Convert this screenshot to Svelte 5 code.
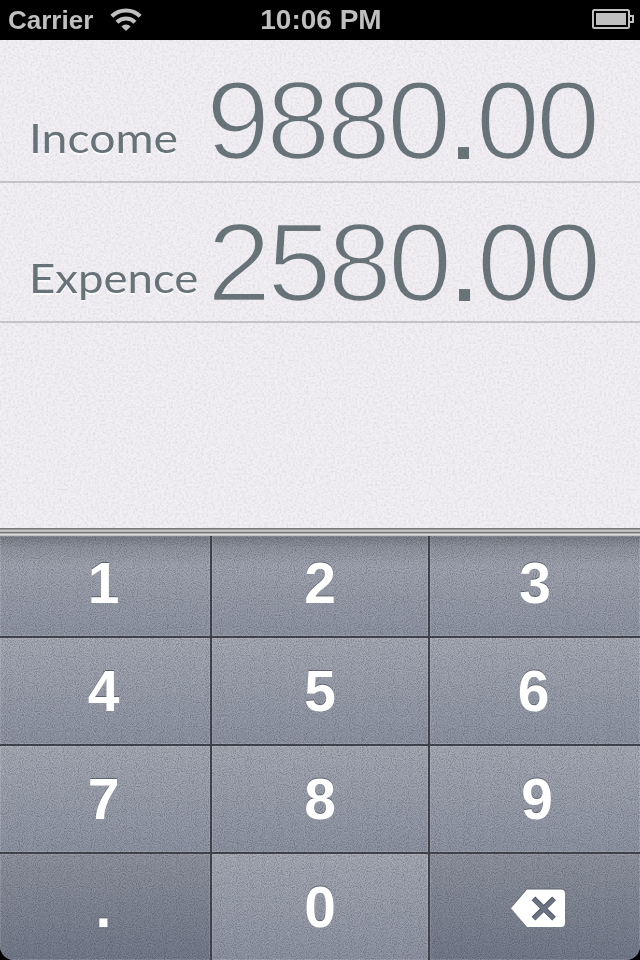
<script>
  const entries = [
    { label: 'Income', whole: '9880', cents: '00' },
    { label: 'Expence', whole: '2580', cents: '00' }
  ];
  const keys = ['1', '2', '3', '4', '5', '6', '7', '8', '9', '.', '0', 'delete'];
</script>

<div class="screen">
  <header class="status">
    <div class="carrier">
      <span>Carrier</span>
      <svg width="32" height="24" viewBox="0 0 32 24" fill="none" stroke="#bfbfbf" stroke-width="4.2">
        <path d="M1.8 9.2 A20.5 20.5 0 0 1 30.2 9.2" />
        <path d="M7 15.2 A12.8 12.8 0 0 1 25 15.2" />
        <path d="M16 24 L11.4 19.4 A6.5 6.5 0 0 1 20.6 19.4 Z" fill="#bfbfbf" stroke="none" />
      </svg>
    </div>
    <time>10:06 PM</time>
    <svg class="battery" width="42" height="20" viewBox="0 0 42 20">
      <rect x="1" y="1" width="36" height="18" rx="1.5" fill="none" stroke="#bfbfbf" stroke-width="2" />
      <rect x="4" y="4" width="30" height="12" fill="#bfbfbf" />
      <path d="M38 7h3v6H38" fill="none" stroke="#bfbfbf" stroke-width="2" />
    </svg>
  </header>

  <main class="paper">
    {#each entries as entry}
      <section class="entry">
        <span class="label">{entry.label}</span>
        <span class="amount">{entry.whole}<span class="point">.</span>{entry.cents}</span>
      </section>
    {/each}
    <svg class="grain" width="640" height="488">
      <filter id="fibre" x="0" y="0" width="100%" height="100%" color-interpolation-filters="sRGB">
        <feTurbulence type="fractalNoise" baseFrequency="0.45" numOctaves="3" seed="4" />
        <feColorMatrix values="0 0 0 0 0.4  0 0 0 0 0.4  0 0 0 0 0.43  0.25 0 0 0 -0.1" />
      </filter>
      <rect width="640" height="488" filter="url(#fibre)" />
    </svg>
  </main>

  <div class="ledge"></div>

  <div class="keypad">
    {#each keys as key, i}
      <button class="key" class:left={i % 3 === 0} class:six={key === '6'} class:nine={key === '9'} class:dark={key === '.' || key === 'delete'} class:top={i < 3} aria-label={key}>
        {#if key === 'delete'}
          <svg class="face erase" width="54" height="39" viewBox="0 0 54 39">
            <path d="M16 0.5H50a4 4 0 0 1 4 4V34a4 4 0 0 1-4 4H16L0 19.3Z" fill="#fff" />
            <path d="M22.5 9.3L43 29.6M43 9.3L22.5 29.6" stroke="#4b5261" stroke-width="5.2" />
            <path d="M23 10.1L42.7 29.6M42.7 10.1L23 29.6" stroke="#6b7383" stroke-width="4" />
          </svg>
        {:else}
          <span class="face">{key}</span>
        {/if}
      </button>
    {/each}
    <svg class="grain" width="640" height="424">
      <filter id="speckle" x="0" y="0" width="100%" height="100%" color-interpolation-filters="sRGB">
        <feTurbulence type="fractalNoise" baseFrequency="0.93" numOctaves="2" seed="9" />
        <feColorMatrix values="0 0 0 0 0.15  0 0 0 0 0.16  0 0 0 0 0.2  0.65 0 0 0 -0.25" />
      </filter>
      <rect width="640" height="424" filter="url(#speckle)" />
    </svg>
  </div>
</div>

<style>
  :global(body) { background: #000; }
  .screen {
    width: 640px;
    height: 960px;
    display: flex;
    flex-direction: column;
    overflow: hidden;
    background: #000;
    font-family: "Liberation Sans", Arial, sans-serif;
  }
  .status {
    height: 40px;
    display: grid;
    grid-template-columns: 1fr auto 1fr;
    align-items: center;
    box-sizing: border-box;
    padding: 0 6px 0 8px;
    color: #bfbfbf;
    font-size: 26px;
    font-weight: bold;
    line-height: 40px;
  }
  .carrier { display: flex; align-items: center; gap: 17px; }
  .carrier svg { margin-top: -2px; }
  time { font-size: 28px; }
  .battery { justify-self: end; margin-top: -2px; }
  .paper {
    position: relative;
    height: 488px;
    background: #f1eff3;
    color: #69757a;
  }
  .entry {
    height: 140px;
    box-sizing: border-box;
    display: flex;
    justify-content: space-between;
    padding: 0 44px 0 29px;
    border-bottom: 2px solid #c6c6cb;
  }
  .entry:first-child { height: 143px; }
  .label {
    font-family: Lato, sans-serif;
    font-size: 41px;
    line-height: 50px;
    margin-top: 73px;
    text-shadow: 0 2px 0 #fff;
    white-space: nowrap;
    transform-origin: left;
    transform: scaleX(1.13);
  }
  .entry:nth-child(2) .label { margin-top: 70px; transform: scaleX(1.11); }
  .amount {
    font-size: 111px;
    line-height: 120px;
    margin-top: 21px;
    letter-spacing: -3.7px;
    white-space: nowrap;
    -webkit-text-stroke: 2.7px #f1eff3;
    transform-origin: right;
    transform: scaleX(1.04);
  }
  .point { -webkit-text-stroke: 0; }
  .entry:nth-child(2) .amount { margin-right: -1px; margin-top: 20px; }
  .grain { position: absolute; left: 0; top: 0; display: block; pointer-events: none; mix-blend-mode: multiply; }
  .ledge {
    height: 8px;
    background: linear-gradient(#777 0 1px, #999 1px 2px, #c6c6c6 2px 3px, #bbb 3px 4px, #777 4px 5px, #aaa 5px 6px, #ddd 6px 7px, #c0c0c0 7px 8px);
  }
  .keypad {
    position: relative;
    height: 424px;
    display: grid;
    grid-template-columns: 210px 216px 210px;
    grid-template-rows: 100px 106px 106px 106px;
    gap: 2px;
    background: #43464f;
    border-radius: 0 0 14px 14px;
    overflow: hidden;
    isolation: isolate;
  }
  .key {
    border: 0;
    padding: 0;
    display: flex;
    align-items: center;
    justify-content: center;
    background: linear-gradient(#a6abb6, #8f95a4);
    box-shadow: inset 0 0 0 1px rgba(255, 255, 255, 0.13);
    color: #fff;
    font: bold 57px/60px "Liberation Sans", Arial, sans-serif;
    text-shadow: 0 -1px 0 #5d616a;
  }
  .face { position: relative; z-index: 2; }
  .left { padding-right: 3px; }
  .six { padding-right: 3px; }
  .nine { padding-left: 4px; }
  .top {
    padding-bottom: 6px;
    background: linear-gradient(#7a7e88, #9397a2 12px, #a1a5b1 30px, #9096a5);
  }
  .dark { background: linear-gradient(#8f94a0, #747b8b); }
  .erase { margin-left: 6px; margin-top: 2px; filter: drop-shadow(0 -1px 0 #5d616a); }
</style>
